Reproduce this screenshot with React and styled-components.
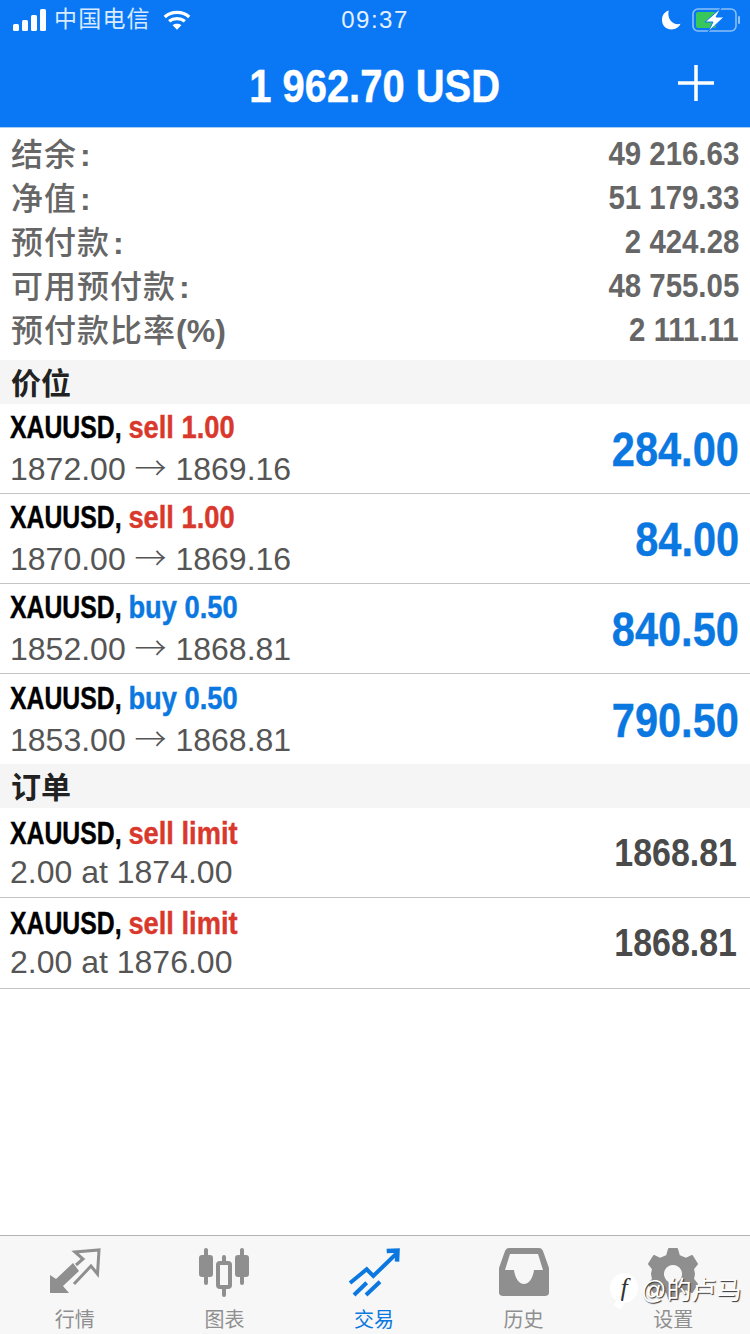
import styled, { createGlobalStyle } from "styled-components"

const GlobalStyle = createGlobalStyle`
  html, body { margin: 0; padding: 0; background: #fff; }
  body { font-family: "Liberation Sans", "Noto Sans CJK SC", sans-serif; }
`

const Page = styled.div`
  position: relative;
  width: 750px;
  height: 1334px;
  display: flex;
  flex-direction: column;
  overflow: hidden;
  background: #fff;
`

const TopArea = styled.div`
  background: #0a78f5;
  border-bottom: 1px solid #a9cdf3;
  height: 127px;
  color: #fff;
`

const StatusBar = styled.div`
  height: 40px;
  display: grid;
  grid-template-columns: 1fr auto 1fr;
  align-items: center;
  padding: 0 10px 0 13px;
`

const StatusLeft = styled.div`
  display: flex;
  align-items: center;
  gap: 8px;
`

const StatusRight = styled.div`
  display: flex;
  align-items: center;
  justify-content: flex-end;
  gap: 11px;
`

const Carrier = styled.span`
  font-size: 23px;
  line-height: 36px;
  letter-spacing: 1.2px;
  margin-right: 4px;
  margin-left: -1px;
  padding-bottom: 2px;
  color: #d8eaff;
`

const Clock = styled.span`
  font-size: 24px;
  letter-spacing: 1.5px;
  margin-left: -3px;
  color: #e4f0ff;
`

const HeaderBar = styled.div`
  height: 87px;
  position: relative;
  display: flex;
  align-items: center;
  justify-content: center;
  padding-top: 3px;
  box-sizing: border-box;
`

const Narrow = styled.span`
  display: inline-block;
  font-weight: 700;
  white-space: nowrap;
  transform: scaleX(${p => p.$x || 0.85});
  transform-origin: ${p => p.$origin || "left"} center;
`

const Balance = styled(Narrow)`
  font-size: 47px;
  color: #fff;
  -webkit-text-stroke: 0.5px #fff;
`

const AddButton = styled.div`
  position: absolute;
  right: 36px;
  top: 25px;
  width: 36px;
  height: 36px;
`

const Summary = styled.div`
  padding: 4px 11px 8px 11px;
`

const SummaryRow = styled.div`
  height: 44px;
  display: flex;
  align-items: center;
  justify-content: space-between;
  color: #666;
`

const SummaryLabel = styled.span`
  font-family: "Noto Sans CJK SC", sans-serif;
  font-size: 32px;
  line-height: 44px;
  font-weight: 500;
  letter-spacing: 1px;
  position: relative;
  top: -1px;
`

const LabelTail = styled.span`
  font-family: "Liberation Sans", sans-serif;
  font-weight: 700;
  letter-spacing: 0;
  margin-left: ${p => p.$gap}px;
`

const SummaryValue = styled(Narrow).attrs({ $x: 0.865 })`
  font-size: 34px;
  color: #666;
  line-height: 42px;
  padding-bottom: 2px;
`

const Section = styled.div`
  box-sizing: border-box;
  height: 44px;
  display: flex;
  align-items: center;
  padding: 0 11px 2px;
  background: #f5f5f5;
  font-family: "Noto Sans CJK SC", sans-serif;
  font-size: 30px;
  line-height: 40px;
  font-weight: 700;
  color: #222;
`

const Row = styled.div`
  box-sizing: border-box;
  height: ${p => (p.$tail ? "91px" : "90px")};
  display: flex;
  align-items: center;
  justify-content: space-between;
  padding: 0 13px 0 10px;
  border-bottom: ${p => (p.$bare ? "none" : "1px solid #c4c4c4")};
`

const RowLeft = styled.div`
  display: flex;
  flex-direction: column;
  gap: 2px;
`

const RowTitle = styled(Narrow).attrs({ $x: 0.8 })`
  font-size: 31px;
  line-height: 36px;
  color: #000;
  -webkit-text-stroke: 0.4px currentColor;
`

const Side = styled.span`
  display: inline-block;
  transform: scaleX(1.1);
  transform-origin: left center;
  color: ${p => (p.$buy ? "#0a78e0" : "#d9382c")};
`

const RowDetail = styled.span`
  font-size: 32px;
  line-height: 36px;
  color: #555;
  white-space: nowrap;
`

const Arrow = styled.span`
  font-family: "Noto Sans CJK SC", sans-serif;
  font-weight: 300;
  line-height: 36px;
`

const Profit = styled(Narrow).attrs({ $x: 0.865 })`
  font-size: 48px;
  color: #0a78e0;
  padding-top: 2px;
  margin-right: -2px;
  -webkit-text-stroke: 0.4px currentColor;
`

const Price = styled(Narrow).attrs({ $x: 0.87 })`
  font-size: 39px;
  color: #4a4a4a;
`

const TabBar = styled.div`
  margin-top: auto;
  height: 98px;
  padding-right: 2px;
  border-top: 1px solid #b4b4b4;
  background: #f7f7f7;
  display: grid;
  grid-template-columns: repeat(5, 1fr);
`

const Tab = styled.div`
  display: flex;
  flex-direction: column;
  align-items: center;
  padding-top: 12px;
  color: ${p => (p.$active ? "#0a78e0" : "#8f8f8f")};
`

const TabIcon = styled.div`
  width: 56px;
  height: 52px;
  display: flex;
  justify-content: center;
`

const TabLabel = styled.span`
  font-family: "Noto Sans CJK SC", sans-serif;
  font-size: 20px;
  line-height: 24px;
  margin-top: 7px;
`

const Watermark = styled.div`
  position: absolute;
  left: 610px;
  top: 1270px;
  display: flex;
  align-items: center;
  gap: 3px;
  font-size: 25px;
  color: #fff;
  text-shadow: 1px 1px 1px #333;
  white-space: nowrap;
`

const WatermarkBadge = styled.div`
  position: relative;
  width: 28px;
  height: 30px;
  border-radius: 50%;
  background: #fff;
  color: #333;
  display: flex;
  align-items: center;
  justify-content: center;
  font-family: "Liberation Serif", serif;
  font-size: 26px;
  font-style: italic;
  text-shadow: none;
  &::after {
    content: "";
    position: absolute;
    left: 5px;
    bottom: -5px;
    width: 8px;
    height: 8px;
    background: #fff;
    transform: rotate(30deg);
  }
`

const SignalIcon = () => (
  <svg width="34" height="22" viewBox="0 0 34 22" fill="#fff">
    <rect x="0" y="15" width="6" height="7" rx="1.5" />
    <rect x="9" y="11" width="6" height="11" rx="1.5" />
    <rect x="18" y="6" width="6" height="16" rx="1.5" />
    <rect x="27" y="0" width="6" height="22" rx="1.5" />
  </svg>
)

const WifiIcon = () => (
  <svg width="28" height="22" viewBox="0 0 32 24" fill="none" stroke="#fff" strokeWidth="3.8">
    <path d="M2 8.5 C10 1.5 22 1.5 30 8.5" />
    <path d="M7 13.5 C12 9.5 20 9.5 25 13.5" />
    <path d="M16 23 L11 18 C14 15.8 18 15.8 21 18 Z" fill="#fff" stroke="none" />
  </svg>
)

const MoonIcon = () => (
  <svg width="19" height="20" viewBox="0 0 20 20" fill="#fff">
    <path d="M7 0 C2.5 1.5 0 5 0 10 C0 16 4.5 20 10 20 C14.5 20 18 17.5 19.5 14 C12.5 16 5 10 7 0 Z" />
  </svg>
)

const BatteryIcon = () => (
  <svg width="48" height="24" viewBox="0 0 48 24">
    <rect x="1" y="1" width="43" height="22" rx="5" fill="none" stroke="#8cc0f5" strokeWidth="1.6" />
    <rect x="4" y="4" width="20" height="16" rx="2" fill="#38c75a" />
    <rect x="46" y="8" width="2" height="8" rx="1" fill="#8cc0f5" />
    <path d="M29 0 L13 14 L21 14 L16 24 L32 9 L24 9 L29 0 Z" fill="#fff" stroke="#0a78f5" strokeWidth="1" />
  </svg>
)

const PlusIcon = () => (
  <svg width="36" height="36" viewBox="0 0 36 36" stroke="#fff" strokeWidth="3.5">
    <path d="M18 0 V36 M0 18 H36" />
  </svg>
)

const QuotesIcon = () => (
  <svg width="52" height="48" viewBox="0 0 52 48">
    <path d="M1 45 V27 L7 31 L24 15 L30 23 L14 38 L20 45 Z" fill="#8f8f8f" />
    <path d="M27 17 L34 11 L26 4 L50 2 L48.5 26 L42 18 L25 36" fill="none" stroke="#8f8f8f" strokeWidth="3" />
  </svg>
)

const ChartIcon = () => (
  <svg width="52" height="50" viewBox="0 0 52 50" fill="#8f8f8f">
    <rect x="6" y="0" width="4" height="37" rx="2" />
    <rect x="1" y="7" width="14" height="22" rx="3" />
    <rect x="24" y="7" width="4" height="10" rx="2" />
    <rect x="20" y="15" width="12" height="24" rx="2" fill="none" stroke="#8f8f8f" strokeWidth="4" />
    <rect x="24" y="37" width="4" height="12" rx="2" />
    <rect x="42" y="0" width="4" height="37" rx="2" />
    <rect x="37" y="7" width="14" height="22" rx="3" />
  </svg>
)

const TradeIcon = () => (
  <svg width="52" height="50" viewBox="0 0 52 50" fill="none" stroke="#0a78e0" strokeWidth="4">
    <path d="M2 35 L18.7 21.3 L25.3 28 L48 6" />
    <path d="M38.7 3 L49.5 2.5 L49 13.7" strokeWidth="4.5" />
    <path d="M6 47 L18.7 34.7" />
    <path d="M18 47 L32 33.7" />
  </svg>
)

const HistoryIcon = () => (
  <svg width="50" height="48" viewBox="0 0 50 48" fill="#8f8f8f">
    <path fillRule="evenodd" d="M10 0 H40 C42 0 43 1 44 3 L50 20 V45 C50 47 48 48 46 48 H4 C2 48 0 47 0 45 V20 L6 3 C7 1 8 0 10 0 Z M11 6 L6 22 H15 C16 30 20 36 25 36 C30 36 34 30 35 22 H44 L39 6 Z" />
  </svg>
)

const GearIcon = () => (
  <svg width="52" height="52" viewBox="0 0 52 52" fill="#8f8f8f" stroke="#8f8f8f" strokeWidth="2" strokeLinejoin="round">
    <path fillRule="evenodd" d="M22 1 H30 L32 8 L39 11 L45 8 L50 16 L46 21 L47 26 L46 31 L50 36 L45 44 L39 41 L32 44 L30 51 H22 L20 44 L13 41 L7 44 L2 36 L6 31 L5 26 L6 21 L2 16 L7 8 L13 11 L20 8 Z M26 16 A10 10 0 1 0 26.01 16 Z" />
  </svg>
)

const summary = [
  { label: "结余", tail: ":", gap: 3, value: "49 216.63" },
  { label: "净值", tail: ":", gap: 3, value: "51 179.33" },
  { label: "预付款", tail: ":", gap: 3, value: "2 424.28" },
  { label: "可用预付款", tail: ":", gap: 3, value: "48 755.05" },
  { label: "预付款比率", tail: "(%)", gap: 0, value: "2 111.11" },
]

const positions = [
  { side: "sell 1.00", open: "1872.00", now: "1869.16", profit: "284.00" },
  { side: "sell 1.00", open: "1870.00", now: "1869.16", profit: "84.00" },
  { side: "buy 0.50", buy: true, open: "1852.00", now: "1868.81", profit: "840.50" },
  { side: "buy 0.50", buy: true, open: "1853.00", now: "1868.81", profit: "790.50" },
]

const orders = [
  { side: "sell limit", detail: "2.00 at 1874.00", price: "1868.81" },
  { side: "sell limit", detail: "2.00 at 1876.00", price: "1868.81" },
]

const tabs = [
  { label: "行情", icon: <QuotesIcon /> },
  { label: "图表", icon: <ChartIcon /> },
  { label: "交易", icon: <TradeIcon />, active: true },
  { label: "历史", icon: <HistoryIcon /> },
  { label: "设置", icon: <GearIcon /> },
]

const App = () => {
  return (
    <Page>
      <GlobalStyle />
      <TopArea>
        <StatusBar>
          <StatusLeft>
            <SignalIcon />
            <Carrier>中国电信</Carrier>
            <WifiIcon />
          </StatusLeft>
          <Clock>09:37</Clock>
          <StatusRight>
            <MoonIcon />
            <BatteryIcon />
          </StatusRight>
        </StatusBar>
        <HeaderBar>
          <Balance $origin="center">1 962.70 USD</Balance>
          <AddButton><PlusIcon /></AddButton>
        </HeaderBar>
      </TopArea>
      <Summary>
        {summary.map(s => (
          <SummaryRow key={s.label}>
            <SummaryLabel>{s.label}<LabelTail $gap={s.gap}>{s.tail}</LabelTail></SummaryLabel>
            <SummaryValue $origin="right">{s.value}</SummaryValue>
          </SummaryRow>
        ))}
      </Summary>
      <Section>价位</Section>
      <div>
        {positions.map((p, i) => (
          <Row key={p.open} $bare={i === positions.length - 1}>
            <RowLeft>
              <RowTitle>XAUUSD, <Side $buy={p.buy}>{p.side}</Side></RowTitle>
              <RowDetail>{p.open} <Arrow>→</Arrow> {p.now}</RowDetail>
            </RowLeft>
            <Profit $origin="right">{p.profit}</Profit>
          </Row>
        ))}
      </div>
      <Section>订单</Section>
      <div>
        {orders.map((o, i) => (
          <Row key={o.detail} $tail={i === orders.length - 1}>
            <RowLeft>
              <RowTitle>XAUUSD, <Side>{o.side}</Side></RowTitle>
              <RowDetail>{o.detail}</RowDetail>
            </RowLeft>
            <Price $origin="right">{o.price}</Price>
          </Row>
        ))}
      </div>
      <TabBar>
        {tabs.map(t => (
          <Tab key={t.label} $active={t.active}>
            <TabIcon>{t.icon}</TabIcon>
            <TabLabel>{t.label}</TabLabel>
          </Tab>
        ))}
      </TabBar>
      <Watermark>
        <WatermarkBadge>f</WatermarkBadge>
        <span>@的卢马</span>
      </Watermark>
    </Page>
  )
}

export default App
